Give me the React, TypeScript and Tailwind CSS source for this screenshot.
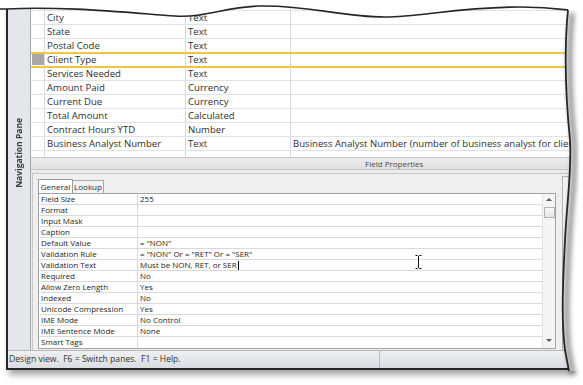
import React from 'react';

const FIELDS: [string, string, string][] = [
  ['Street', 'Text', ''],
  ['City', 'Text', ''],
  ['State', 'Text', ''],
  ['Postal Code', 'Text', ''],
  ['Client Type', 'Text', ''],
  ['Services Needed', 'Text', ''],
  ['Amount Paid', 'Currency', ''],
  ['Current Due', 'Currency', ''],
  ['Total Amount', 'Calculated', ''],
  ['Contract Hours YTD', 'Number', ''],
  ['Business Analyst Number', 'Text', 'Business Analyst Number (number of business analyst for client)'],
  ['', '', ''],
];

const PROPS: [string, string][] = [
  ['Field Size', '255'],
  ['Format', ''],
  ['Input Mask', ''],
  ['Caption', ''],
  ['Default Value', '= "NON"'],
  ['Validation Rule', '= "NON" Or = "RET" Or = "SER"'],
  ['Validation Text', 'Must be NON, RET, or SER'],
  ['Required', 'No'],
  ['Allow Zero Length', 'Yes'],
  ['Indexed', 'No'],
  ['Unicode Compression', 'Yes'],
  ['IME Mode', 'No Control'],
  ['IME Sentence Mode', 'None'],
  ['Smart Tags', ''],
];

function NavPane() {
  return (
    <div className="flex w-[23px] shrink-0 items-start justify-center border-r border-[#a4a9af] bg-[#e3e6ea] pt-[118px]">
      <span className="rotate-180 text-[8.5px] font-bold leading-none text-[#3a3d42] [writing-mode:vertical-rl]">
        Navigation Pane
      </span>
    </div>
  );
}

function FieldGrid() {
  return (
    <div className="h-[157px] overflow-hidden bg-white text-[9.6px] text-[#303030]">
      <div className="-mt-[3px]">
        {FIELDS.map(([name, type, desc], i) => {
          const current = name === 'Client Type';
          return (
            <div key={i} className="relative flex h-[14px] border-b border-[#dfe3e9] leading-[13px]">
              <div className="w-[14px] shrink-0 border-r border-[#d6dbe1]">
                {current && <div className="m-[1px] h-[11px] w-[12px] bg-[#a7a7a7]" />}
              </div>
              <div className="w-[141px] shrink-0 border-r border-[#d6dbe1] pl-[2px]">{name}</div>
              <div className="w-[105px] shrink-0 border-r border-[#d6dbe1] pl-[2px]">{type}</div>
              <div className="min-w-0 flex-1 overflow-hidden whitespace-nowrap pl-[2px]">{desc}</div>
              {current && (
                <div className="pointer-events-none absolute -top-[1px] left-0 right-0 h-[16px] border-y-2 border-[#f3c53e]" />
              )}
            </div>
          );
        })}
      </div>
    </div>
  );
}

function ScrollBar() {
  return (
    <div className="flex w-[13px] shrink-0 flex-col items-center border-l border-[#e2e2e2] bg-[#f4f4f4]">
      <div className="mt-[4px] h-0 w-0 border-x-[3px] border-b-[3px] border-x-transparent border-b-[#5a5a5a]" />
      <div className="mt-[6px] h-[11px] w-[11px] border border-[#b3b3b3] bg-gradient-to-b from-[#fbfbfb] to-[#e4e4e4]" />
      <div className="flex-1" />
      <div className="mb-[6px] h-0 w-0 border-x-[3px] border-t-[3px] border-x-transparent border-t-[#5a5a5a]" />
    </div>
  );
}

function PropertyGrid() {
  return (
    <div className="flex border border-[#a3a3a3] bg-white">
      <div className="min-w-0 flex-1">
        {PROPS.map(([label, value]) => (
          <div key={label} className="flex h-[11px] border-b border-[#d9d9d9] text-[8px] leading-[10px] text-[#1e1e1e] last:border-b-0">
            <div className="w-[99px] shrink-0 border-r border-[#d9d9d9] pl-[2px]">{label}</div>
            <div className="flex min-w-0 flex-1 items-center whitespace-nowrap pl-[2px]">
              <span>{value}</span>
              {label === 'Validation Text' && <span className="ml-[1px] h-[9px] w-[1px] bg-black" />}
            </div>
          </div>
        ))}
      </div>
      <ScrollBar />
    </div>
  );
}

function LowerPane() {
  return (
    <div className="flex-1 bg-[#ebebeb] pt-[3px] pl-[1px]">
      <div className="flex h-full border-l border-t border-[#c6c6c6] bg-[#efefef]">
        <div className="w-[523px] shrink-0 pl-[5px] pt-[5px]">
          <div className="flex h-[14px] items-end text-[8px] leading-none text-[#2a2a2a]">
            <div className="flex h-[14px] w-[35px] items-center justify-center border-x border-t border-[#9d9d9d] bg-white">
              General
            </div>
            <div className="flex h-[13px] w-[31px] items-center justify-center border-r border-t border-[#a8a8a8] bg-[#f2f2f2]">
              Lookup
            </div>
          </div>
          <PropertyGrid />
        </div>
        <div className="ml-[6px] mt-[2px] flex-1 border-l border-t border-[#b3b3b3] bg-[#f3f3f3]" />
      </div>
    </div>
  );
}

function StatusBar() {
  return (
    <div className="flex h-[18px] border-t border-[#b3b8be] bg-gradient-to-b from-[#eef0f3] to-[#d9dde2] text-[8.6px] leading-[17px] text-[#333]">
      <div className="w-[372px] shrink-0 whitespace-pre border-r border-[#b9bdc3] pl-[1px]">
        Design view.  F6 = Switch panes.  F1 = Help.
      </div>
      <div className="flex-1" />
    </div>
  );
}

function TornEdges() {
  const top = 'M0,9 L6,9 C60,6 120,12 175,16 C205,18 225,7 260,6 C310,5 340,17 385,17 C420,17 460,7 520,7 C545,7 560,9 568,10';
  const side = 'M568,10 C564,50 566,100 570,140 C572,170 567,200 565,240 C563,280 561,320 565,350 L569,371';
  return (
    <svg className="pointer-events-none absolute left-0 top-0" width="583" height="385" viewBox="0 0 583 385">
      <defs>
        <filter id="blur" x="-50%" y="-10%" width="200%" height="120%">
          <feGaussianBlur stdDeviation="2.6" />
        </filter>
      </defs>
      <path d={`${side} L583,371 L583,0 Z`} fill="#ffffff" />
      <path d={side} transform="translate(4,3)" stroke="#000" strokeOpacity="0.45" strokeWidth="5" fill="none" filter="url(#blur)" />
      <path d={`${top} L583,10 L583,0 L0,0 Z`} fill="#ffffff" />
      <path d={top} stroke="#262626" strokeWidth="1.6" fill="none" />
      <path d={side} stroke="#262626" strokeWidth="1.8" fill="none" />
    </svg>
  );
}

function IBeam() {
  return (
    <svg className="pointer-events-none absolute left-[415px] top-[255px]" width="7" height="14" viewBox="0 0 7 14">
      <path d="M0.5,0.5 H2.5 L3.5,1.5 L4.5,0.5 H6.5 M3.5,1.5 V12.5 M0.5,13.5 H2.5 L3.5,12.5 L4.5,13.5 H6.5" stroke="#fff" strokeWidth="2.2" fill="none" />
      <path d="M0.5,0.5 H2.5 L3.5,1.5 L4.5,0.5 H6.5 M3.5,1.5 V12.5 M0.5,13.5 H2.5 L3.5,12.5 L4.5,13.5 H6.5" stroke="#111" strokeWidth="1" fill="none" />
    </svg>
  );
}

export default function App() {
  return (
    <div className="relative h-[385px] w-[583px] overflow-hidden bg-white font-['Open_Sans',sans-serif] text-[#2a2a2a]">
      <div className="ml-[6px] flex h-[370px] w-[566px] flex-col overflow-hidden border-b-2 border-l-2 border-[#262626] bg-[#eeeeee] shadow-[3px_5px_6px_rgba(0,0,0,0.35)]">
        <div className="flex h-[350px]">
          <NavPane />
          <div className="flex min-w-0 flex-1 flex-col">
            <FieldGrid />
            <div className="h-[13px] border-y border-[#c4c4c4] bg-gradient-to-b from-[#ececec] to-[#e0e0e0] pl-[334px] text-[8px] leading-[11px] text-[#4a4a4a]">
              Field Properties
            </div>
            <LowerPane />
          </div>
        </div>
        <StatusBar />
      </div>
      <TornEdges />
      <IBeam />
    </div>
  );
}
